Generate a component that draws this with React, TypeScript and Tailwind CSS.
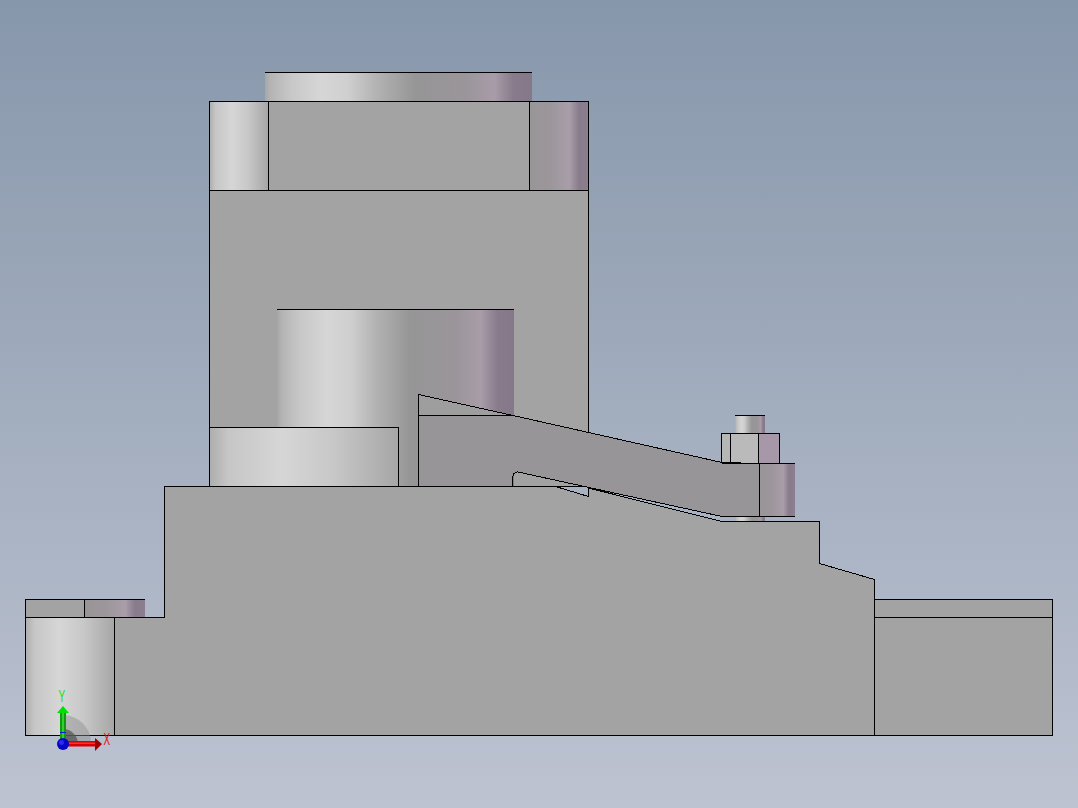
import React from 'react';

// stops shared by the shaded cylinder faces
const fullStops: [number, string][] = [
  [0, '#a6a6a6'], [0.02, '#b4b4b4'], [0.1, '#c8c8c8'], [0.21, '#d6d6d6'], [0.31, '#cfcfcf'],
  [0.42, '#b2b2b2'], [0.56, '#969696'], [0.75, '#9a959a'], [0.86, '#a89ca8'], [0.93, '#887b8b'], [1, '#857888'],
];
const leftStops: [number, string][] = [
  [0, '#adadad'], [0.1, '#c6c6c6'], [0.38, '#d6d6d6'], [0.65, '#c8c8c8'], [1, '#a6a6a6'],
];
const rightStops: [number, string][] = [
  [0, '#989597'], [0.35, '#9c969b'], [0.68, '#a99da9'], [0.84, '#887b8b'], [1, '#8b7e8e'],
];

const Grad = ({ id, stops }: { id: string; stops: [number, string][] }) => (
  <linearGradient id={id} x1="0" x2="1" y1="0" y2="0">
    {stops.map(([o, c]) => (
      <stop key={o} offset={o} stopColor={c} />
    ))}
  </linearGradient>
);

const BODY = '#a3a3a3';
const LEVER = '#979597';

export default function App() {
  return (
    <div className="relative w-[1078px] h-[808px] overflow-hidden bg-gradient-to-b from-[#8797ab] to-[#bdc3d1]">
      <svg width="1078" height="808" viewBox="0 0 1078 808" className="block">
        <defs>
          <Grad id="full" stops={fullStops} />
          <Grad id="left" stops={leftStops} />
          <Grad id="right" stops={rightStops} />
        </defs>

        <g stroke="#000" strokeWidth="1" shapeRendering="crispEdges">
          {/* top cylinder */}
          <rect x="265" y="72" width="267" height="29" fill="url(#full)" stroke="none" />
          <line x1="265" y1="72.5" x2="532" y2="72.5" />

          {/* upper block */}
          <rect x="209.5" y="190.5" width="379" height="296" fill={BODY} />
          <rect x="209.5" y="101.5" width="59" height="89" fill="url(#left)" />
          <rect x="268.5" y="101.5" width="261" height="89" fill={BODY} />
          <rect x="529.5" y="101.5" width="59" height="89" fill="url(#right)" />

          {/* bore, runs down behind the boss and the lever */}
          <rect x="277" y="309" width="237" height="177" fill="url(#full)" stroke="none" />
          <line x1="277" y1="309.5" x2="514" y2="309.5" />

          {/* lower boss */}
          <rect x="209.5" y="427.5" width="189" height="59" fill="url(#left)" />
          <line x1="398.5" y1="427.5" x2="398.5" y2="486.5" />

          {/* bolt */}
          <rect x="735" y="415" width="30" height="19" fill="url(#full)" stroke="none" />
          <line x1="735" y1="415.5" x2="765" y2="415.5" />
          <rect x="735" y="516" width="30" height="6" fill="url(#full)" stroke="none" />

          {/* nut */}
          <rect x="721.5" y="433.5" width="9" height="30" fill="#b6b6b6" />
          <rect x="730.5" y="433.5" width="28" height="30" fill="#bababa" />
          <rect x="758.5" y="433.5" width="21" height="30" fill="#a698a8" />

          {/* clamp lever */}
          <polygon points="418.5,394.5 513,415.5 418.5,415.5" fill="#9f9e9f" />
          <path
            d="M418.5 415.5 L513 415.5 L722 462.5 L759.5 463.5 L759.5 516.5 L722 516.5 L518 472 Q512.5 471.5 512.5 480 L512.5 486.5 L418.5 486.5 Z"
            fill={LEVER}
          />
          <line x1="418.5" y1="415.5" x2="513" y2="415.5" />
          <rect x="759.5" y="463.5" width="35" height="53" fill="url(#right)" stroke="none" />
          <polyline points="722,463.5 795,463.5" fill="none" />
          <polyline points="722,516.5 795,516.5" fill="none" />

          {/* base */}
          <rect x="25.5" y="599.5" width="59" height="18" fill={BODY} />
          <rect x="84.5" y="599.5" width="60" height="18" fill="url(#right)" stroke="none" />
          <polyline points="84.5,599.5 144.5,599.5" fill="none" />
          <line x1="84.5" y1="599.5" x2="84.5" y2="617.5" />
          <rect x="25.5" y="617.5" width="89" height="118" fill="url(#left)" />
          <polygon
            points="164.5,486.5 555.5,486.5 588.5,496.5 588.5,488 722,521.5 819.5,521.5 819.5,563.5 874.5,579.5 874.5,735.5 114.5,735.5 114.5,617.5 164.5,617.5"
            fill={BODY}
          />
          <rect x="874.5" y="599.5" width="178" height="18" fill={BODY} />
          <rect x="874.5" y="617.5" width="178" height="118" fill={BODY} />
          <line x1="759.5" y1="463.5" x2="759.5" y2="516.5" />
        </g>

        {/* triad */}
        <g>
          <path d="M63 715 A28 28 0 0 1 91 743 L63 743 Z" fill="#8c8c8c" opacity="0.45" />
          <path d="M63 729 A15 15 0 0 1 78 744 L63 744 Z" fill="#555555" opacity="0.75" />
          <rect x="60" y="712" width="6" height="32" fill="#0f9a0f" />
          <rect x="62" y="712" width="2" height="32" fill="#2fd02f" />
          <polygon points="63,706 69,713 57,713" fill="#00e000" />
          <rect x="60" y="732" width="6" height="1" fill="#1010e0" />
          <rect x="63" y="741" width="33" height="5.5" fill="#d80000" />
          <rect x="63" y="742.5" width="33" height="1.5" fill="#ff3030" />
          <polygon points="95,738 102,744 95,751" fill="#a00000" />
          <circle cx="63" cy="744" r="6" fill="#0606c8" />
          <circle cx="61.5" cy="742.5" r="2.5" fill="#2a2af0" />
          <text
            transform="translate(58.5 702) scale(0.62 1)"
            className="font-['Liberation_Sans',sans-serif] text-[16px]"
            fill="#12e012"
          >
            Y
          </text>
          <text
            transform="translate(103.5 745) scale(0.62 1)"
            className="font-['Liberation_Sans',sans-serif] text-[16px]"
            fill="#e01010"
          >
            X
          </text>
        </g>
      </svg>
    </div>
  );
}
